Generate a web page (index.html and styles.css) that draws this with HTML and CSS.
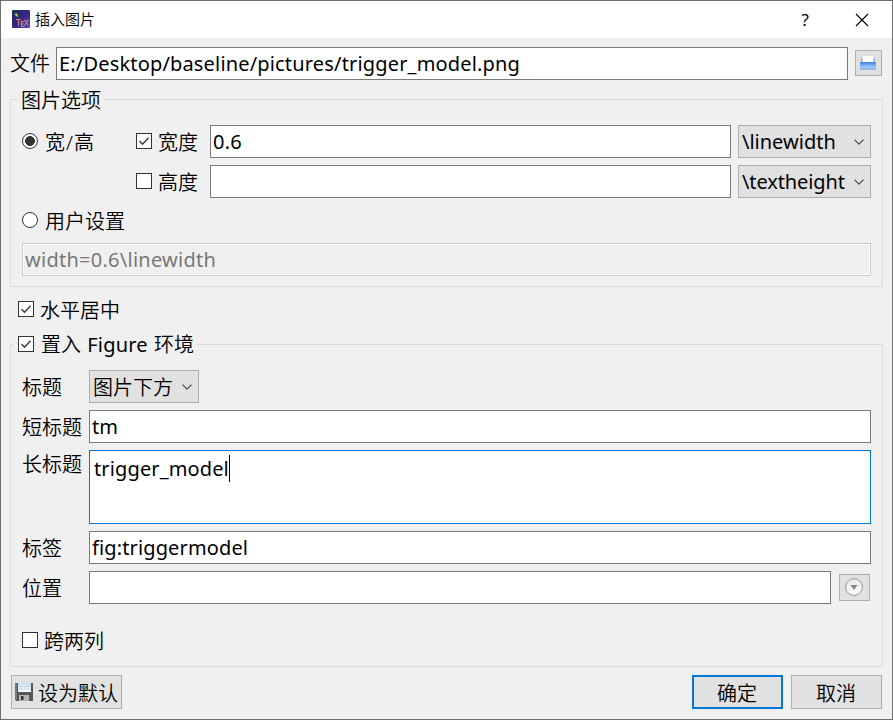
FILE: index.html
```html
<!DOCTYPE html>
<html lang="zh-CN">
<head>
<meta charset="utf-8">
<title>插入图片</title>
<link rel="stylesheet" href="styles.css">
</head>
<body>
<div class="dialog">
  <header class="titlebar">
    <svg class="app-icon" width="18" height="18" viewBox="0 0 18 18">
      <defs><linearGradient id="sky" x1="0" y1="0" x2="1" y2="1"><stop offset="0" stop-color="#183052"/><stop offset=".5" stop-color="#382383"/><stop offset="1" stop-color="#5940cc"/></linearGradient></defs>
      <rect width="18" height="18" rx="1" fill="url(#sky)"/>
      <path d="M2 3l2 1 3 2-2 1-2-2z" fill="#5db63c"/><circle cx="4.500" cy="4.500" r="1" fill="#d8ec52"/>
      <path d="M4 9.500h5M6.500 9.500v6M12.500 11.500h-3v5h3M9.500 14h2.500M12.500 9.500l4 6M16.500 9.500l-4 6" fill="none" stroke="#c58a6c" stroke-width="1.200"/>
    </svg>
    <span class="caption">插入图片</span>
    <span class="help">?</span>
    <svg class="close" width="14" height="14" viewBox="0 0 14 14"><path d="M1 1l12 12M13 1L1 13" stroke="#000" stroke-width="1.100"/></svg>
  </header>

  <main class="content">
    <div class="row file-row">
      <span class="file-label">文件</span>
      <div class="field grow"><span class="t-path">E:/Desktop/baseline/pictures/trigger_model.png</span></div>
      <div class="tool open">
        <svg width="16" height="15" viewBox="0 0 16 15">
          <defs><linearGradient id="tray" x1="0" y1="0" x2="0" y2="1"><stop offset="0" stop-color="#3d80d5"/><stop offset=".45" stop-color="#79b5f7"/><stop offset=".8" stop-color="#a3cdfb"/><stop offset="1" stop-color="#5793dc"/></linearGradient></defs>
          <path d="M1 3h14v5H1z" fill="#8db8ee"/><path d="M2.500 .5h11v7h-11z" fill="#fdfdfd" stroke="#d0d3d8" stroke-width=".7"/>
          <path d="M0 7h16v7.500H0z" fill="url(#tray)"/>
        </svg>
      </div>
    </div>

    <section class="group options">
      <h2 class="legend">图片选项</h2>
      <div class="row">
        <span class="radio on"></span><span class="choice size-choice">宽/高</span>
        <span class="check on"><svg viewBox="0 0 14 14"><path d="M2.500 7l3 3.200 6-6.500"/></svg></span><span class="dimension">宽度</span>
        <div class="field grow"><span class="t-num">0.6</span></div>
        <div class="select unit"><span class="t-line">\linewidth</span><svg class="arrow" viewBox="0 0 10 6"><path d="M.5 .7L5 5.200 9.500 .7"/></svg></div>
      </div>
      <div class="row second">
        <span class="check"></span><span class="dimension">高度</span>
        <div class="field grow"></div>
        <div class="select unit"><span class="t-text">\textheight</span><svg class="arrow" viewBox="0 0 10 6"><path d="M.5 .7L5 5.200 9.500 .7"/></svg></div>
      </div>
      <div class="row custom"><span class="radio"></span><span class="choice">用户设置</span></div>
      <div class="field disabled"><span class="t-width">width=0.6\linewidth</span></div>
    </section>

    <div class="row center-row"><span class="check on"><svg viewBox="0 0 14 14"><path d="M2.500 7l3 3.200 6-6.500"/></svg></span><span class="option">水平居中</span></div>

    <section class="group figure">
      <h2 class="legend row"><span class="check on"><svg viewBox="0 0 14 14"><path d="M2.500 7l3 3.200 6-6.500"/></svg></span><span class="option">置入 <span class="t-figure">Figure</span> 环境</span></h2>
      <div class="row"><span class="label">标题</span><div class="select place">图片下方<svg class="arrow" viewBox="0 0 10 6"><path d="M.5 .7L5 5.200 9.500 .7"/></svg></div></div>
      <div class="row"><span class="label">短标题</span><div class="field grow"><span class="t-tm">tm</span></div></div>
      <div class="row tall"><span class="label">长标题</span><div class="field grow area"><span class="t-long">trigger_model</span><i class="caret"></i></div></div>
      <div class="row"><span class="label">标签</span><div class="field grow"><span class="t-fig">fig:triggermodel</span></div></div>
      <div class="row"><span class="label">位置</span><div class="field grow"></div>
        <div class="tool position">
          <svg width="18" height="18" viewBox="0 0 18 18"><defs><linearGradient id="disc" x1="0" y1="0" x2="0" y2="1"><stop offset="0" stop-color="#e4e4e4"/><stop offset="1" stop-color="#fff"/></linearGradient></defs><circle cx="9" cy="9" r="8.400" fill="url(#disc)" stroke="#969696"/><path d="M5.500 7h7L9 12z" fill="#858585"/></svg>
        </div>
      </div>
      <div class="row span-row"><span class="check"></span><span class="option">跨两列</span></div>
    </section>

    <footer class="row actions">
      <div class="button save">
        <svg width="18" height="18" viewBox="0 0 18 18">
          <defs><linearGradient id="paper" x1="0" y1="0" x2="0" y2="1"><stop offset="0" stop-color="#c9dff2"/><stop offset="1" stop-color="#fff"/></linearGradient></defs>
          <path d="M0 0h18v18H1.500L0 16.500z" fill="#55565a"/><path d="M0 0h2v16H0z" fill="#77787b"/>
          <path d="M3 0h13v9H3z" fill="url(#paper)"/><path d="M3 3.500h13M3 6h13" stroke="#b9cddd" stroke-width=".7"/>
          <path d="M4 12h10v6H4z" fill="#b4b4b4"/><path d="M6 13h2.500v4H6z" fill="#333"/>
        </svg><span>设为默认</span>
      </div>
      <div class="button primary"><span>确定</span></div>
      <div class="button"><span>取消</span></div>
    </footer>
  </main>
</div>
</body>
</html>
```

FILE: styles.css
```css
* { box-sizing: border-box; }
body { margin: 0; font: 20px/33px "Noto Sans", "Noto Sans CJK SC", sans-serif; color: #000; }
.dialog { width: 893px; height: 720px; border: 1px solid #6e6e6e; background: #f0f0f0; overflow: hidden; }
.titlebar { display: flex; align-items: center; height: 37px; padding: 0 23px 0 11px; background: #fff; }
.app-icon { margin: 0 5px 1px 0; }
.caption { flex: 1; font-size: 15px; font-weight: 350; }
.help { font-size: 17px; margin-right: 46px; }
.content { padding: 9px 9px 0; }
.row { display: flex; align-items: center; height: 33px; white-space: nowrap; }
.row > * { flex: none; }
.row > .grow { flex: 1 1 0; }
.file-label { width: 46px; }
.file-label, .choice, .dimension, .option, .label, .place, .button { font-weight: 350; }
.choice, .dimension, .option, .label, .button span { padding-top: 2px; }
.file-row { margin-right: 1px; }
.field { display: flex; height: 33px; padding-left: 2px; line-height: 31px; border: 1px solid #7a7a7a; background: #fff; }
.tool { display: grid; place-items: center; border: 1px solid #adadad; background: #e1e1e1; }
.tool svg { display: block; }
.open { width: 27px; height: 26px; margin: 0 0 1px 7px; }
.open svg { margin: 0 1px 1px 0; }
.group { border: 1px solid #dcdcdc; }
.legend { width: max-content; margin: -16px 0 0 7px; padding: 0 3px; height: 32px; font-size: 20px; font-weight: 350; line-height: 34px; background: #f0f0f0; }
.options { height: 188px; margin-top: 19px; padding: 0 11px; }
.options .legend { margin-left: -4px; margin-bottom: 9px; }
.radio { width: 16px; height: 16px; margin-bottom: 1px; border: 1px solid #333; border-radius: 50%; background: #fff; }
.radio.on { background: radial-gradient(circle, #333 0 4.600px, #fff 5.200px); }
.check { width: 16px; height: 16px; margin-bottom: 1px; border: 1px solid #333; background: #fff; }
.check svg { display: block; width: 14px; height: 14px; }
.check path { fill: none; stroke: #333; stroke-width: 1.300; }
.choice { margin-left: 7px; }
.size-choice { width: 91px; letter-spacing: 1px; }
.dimension { width: 52px; margin-left: 6px; }
.select { position: relative; height: 33px; padding-left: 3px; line-height: 31px; border: 1px solid #adadad; background: #e1e1e1; }
.unit { width: 133px; margin-left: 7px; }
.place { width: 110px; line-height: 33px; }
.arrow { position: absolute; right: 6px; top: 13px; width: 10px; height: 6px; }
.arrow path { fill: none; stroke: #444; stroke-width: 1.100; }
.second { margin-top: 7px; padding-left: 114px; }
.custom { margin-top: 6px; }
.disabled { margin-top: 6px; color: #787878; background: #f0f0f0; border-color: #ccc; box-shadow: inset 0 0 0 1px #fff; }
.center-row { height: 34px; margin-top: 5px; padding-left: 8px; }
.center-row .check { margin-bottom: 0; }
.option { margin-left: 6px; }
.figure { height: 323px; margin-top: 18px; padding: 0 11px; }
.figure .legend { margin-left: -8px; margin-bottom: 9px; padding-left: 4px; }
.figure .legend .check { margin-bottom: 2px; }
.figure .legend .option { margin-left: 7px; padding-top: 0; word-spacing: 1px; }
.figure > .row + .row { margin-top: 7px; }
.label { width: 67px; }
.figure > .tall { height: 74px; align-items: flex-start; }
.tall .label { padding-top: 0; line-height: 30px; }
.area { height: 74px; padding: 4px; line-height: 27px; border-color: #0078d7; }
.caret { width: 1px; height: 27px; background: #000; }
.t-path { letter-spacing: .17px; }
.t-width { letter-spacing: .26px; }
.t-num { letter-spacing: .2px; }
.t-text { letter-spacing: -.1px; }
.t-long, .t-fig { letter-spacing: .13px; }
.t-figure { letter-spacing: .2px; font-weight: 400; }
.position { width: 31px; height: 27px; margin: 0 1px 0 8px; }
.position svg { margin: 0 2px 1px 0; }
.figure > .row + .span-row { margin-top: 20px; }
.span-row .option { padding-top: 1px; }
.actions { height: 34px; margin: 8px 1px 0; }
.button { display: flex; align-items: center; justify-content: center; width: 91px; height: 34px; margin-left: 8px; padding-right: 1px; border: 1px solid #adadad; background: #e1e1e1; }
.primary { border: 2px solid #0078d7; }
.save { width: 111px; margin: 0 auto 0 0; justify-content: flex-start; padding-left: 3px; }
.save svg { margin-right: 5px; }
```
